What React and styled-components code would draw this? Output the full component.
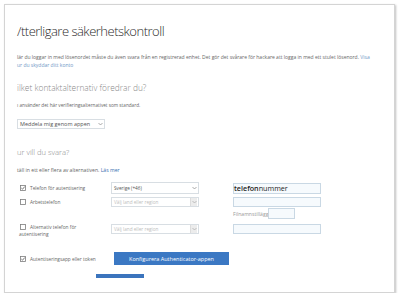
import React from "react";
import styled, { createGlobalStyle } from "styled-components";

const GlobalStyle = createGlobalStyle`
  html, body { margin: 0; padding: 0; background: #fff; }
  body { font-family: "Open Sans", "Liberation Sans", sans-serif; color: #555; }
`;

const Frame = styled.div`
  box-sizing: border-box;
  margin: 4px 0 0 4px;
  width: 391px;
  height: 289px;
  border: 1px solid #d4d4d4;
  box-shadow: 1px 1px 2px rgba(0, 0, 0, 0.25);
  padding: 16px 0 0 12px;
  background: #fff;
  overflow: hidden;
`;

const Title = styled.h1`
  margin: 0;
  height: 20px;
  line-height: 20px;
  font-size: 13px;
  font-weight: 300;
  letter-spacing: -0.5px;
  color: #2b2b2b;
  white-space: nowrap;
`;

const Intro = styled.p`
  margin: 12px 0 0;
  font-size: 5px;
  line-height: 8px;
  color: #666;
  white-space: nowrap;
`;

const Link = styled.a`
  color: ${({ $soft }) => ($soft ? "#6f97c6" : "#3a6fb0")};
  text-decoration: none;
`;

const Heading = styled.h2`
  margin: ${({ $top }) => $top}px 0 0;
  height: 12px;
  line-height: 12px;
  font-size: ${({ $size }) => $size}px;
  font-weight: 300;
  color: #8a8a8a;
  white-space: nowrap;
`;

const Note = styled.p`
  margin: ${({ $top }) => $top}px 0 0;
  font-size: ${({ $size }) => $size || 4.7}px;
  line-height: 8px;
  color: #666;
  white-space: nowrap;
`;

const Select = styled.div`
  box-sizing: border-box;
  display: flex;
  align-items: center;
  justify-content: space-between;
  width: 88px;
  height: ${({ $h }) => $h || 10}px;
  margin-top: ${({ $top }) => $top || 0}px;
  padding: 0 1px 0 2px;
  border: 1px solid #d8dee3;
  background: #fff;
  font-size: ${({ $size }) => $size || 4.7}px;
  color: ${({ $placeholder }) => ($placeholder ? "#bdbdbd" : "#555")};
  white-space: nowrap;
`;

const Chevron = styled.span`
  display: flex;
  align-items: center;
  justify-content: center;
  width: 6px;
  height: 100%;
  background: ${({ $boxed }) => ($boxed ? "#ececec" : "transparent")};
  border-left: ${({ $boxed }) => ($boxed ? "1px solid #dcdcdc" : "none")};
`;

const Options = styled.div`
  display: flex;
  flex-direction: column;
  margin-top: 8px;
`;

const Row = styled.div`
  display: grid;
  grid-template-columns: 94px 88px 34px 88px;
  align-items: ${({ $start }) => ($start ? "start" : "center")};
  height: ${({ $h }) => $h}px;
  margin-top: ${({ $top }) => $top}px;
`;

const Option = styled.label`
  display: flex;
  align-items: center;
  gap: 4px;
  padding-left: 3px;
  font-size: 4.8px;
  color: #666;
  white-space: nowrap;
`;

const WrapOption = styled.label`
  display: block;
  width: 62px;
  padding-left: 2px;
  font-size: 4.8px;
  line-height: 7px;
  color: #666;

  svg {
    vertical-align: -1px;
    margin: 0 4px 0 1px;
  }
`;

const Field = styled.div`
  box-sizing: border-box;
  grid-column: ${({ $col }) => $col || 4};
  width: ${({ $w }) => $w || 88}px;
  height: ${({ $h }) => $h || 10}px;
  border: 1px solid #c9d8e4;
  background: #f6fafd;
  font-size: 7.2px;
  line-height: ${({ $h }) => ($h || 10) - 2}px;
  color: #1e1e1e;
  white-space: nowrap;

  b {
    font-weight: 600;
  }
`;

const Extension = styled.div`
  grid-column: 4;
  display: flex;
  align-items: center;
  font-size: 5.1px;
  color: #999;
  white-space: nowrap;
`;

const Action = styled.button`
  grid-column: 2 / span 3;
  margin-left: 3px;
  width: 115px;
  height: 13px;
  padding: 0;
  border: none;
  background: #3b78c3;
  color: #fff;
  font-family: inherit;
  font-size: 5.5px;
`;

const Bar = styled.div`
  margin: 9px 0 0 79px;
  width: 48px;
  height: 4px;
  background: #3b74bd;
`;

function Box({ checked }) {
  return (
    <svg width="6" height="6" viewBox="0 0 6 6">
      <rect x="0.5" y="0.5" width="5" height="5" fill="#fff" stroke="#7d7d7d" strokeWidth="0.8" />
      {checked && <path d="M1.3 3 L2.5 4.2 L4.8 1.5" fill="none" stroke="#555" strokeWidth="0.8" />}
    </svg>
  );
}

function Down({ color = "#888" }) {
  return (
    <svg width="5" height="4" viewBox="0 0 5 4">
      <path d="M0.5 1 L2.5 3 L4.5 1" fill="none" stroke={color} strokeWidth="0.7" />
    </svg>
  );
}

export default function App() {
  return (
    <>
      <GlobalStyle />
      <Frame>
        <Title>/tterligare säkerhetskontroll</Title>
        <Intro>
          lär du loggar in med lösenordet måste du även svara från en registrerad enhet. Det gör det svårare för
          hackare att logga in med ett stulet lösenord. <Link $soft href="#">Visa</Link>
          <br />
          <Link $soft href="#">ur du skyddar ditt konto</Link>
        </Intro>

        <Heading $top={13} $size={8.4}>ilket kontaktalternativ föredrar du?</Heading>
        <Note $top={7}>ı använder det här verifieringsalternativet som standard.</Note>
        <Select $top={10} $size={5.5}>
          Meddela mig genom appen
          <Chevron>
            <Down />
          </Chevron>
        </Select>

        <Heading $top={17} $size={7.6}>ur vill du svara?</Heading>
        <Note $top={8} $size={5.1}>
          täll in ett eller flera av alternativen. <Link href="#">Läs mer</Link>
        </Note>

        <Options>
          <Row $h={12} $top={0}>
            <Option>
              <Box checked />
              Telefon för autentisering
            </Option>
            <Select $h={12}>
              Sverige (+46)
              <Chevron>
                <Down />
              </Chevron>
            </Select>
            <Field $h={11}>
              <b>telefon</b>nummer
            </Field>
          </Row>
          <Row $h={10} $top={3}>
            <Option>
              <Box />
              Arbetstelefon
            </Option>
            <Select $placeholder>
              Välj land eller region
              <Chevron $boxed>
                <Down color="#aaa" />
              </Chevron>
            </Select>
            <Field />
          </Row>
          <Row $h={11} $top={1}>
            <Extension>
              Filnamnstillägg
              <Field $w={27} $h={11} />
            </Extension>
          </Row>
          <Row $h={10} $top={5} $start>
            <WrapOption>
              <Box />
              Alternativ telefon för autentisering
            </WrapOption>
            <Select $placeholder>
              Välj land eller region
              <Chevron $boxed>
                <Down color="#aaa" />
              </Chevron>
            </Select>
            <Field />
          </Row>
          <Row $h={13} $top={18}>
            <Option>
              <Box checked />
              Autentiseringsapp eller token
            </Option>
            <Action>Konfigurera Authenticator-appen</Action>
          </Row>
        </Options>
        <Bar />
      </Frame>
    </>
  );
}
